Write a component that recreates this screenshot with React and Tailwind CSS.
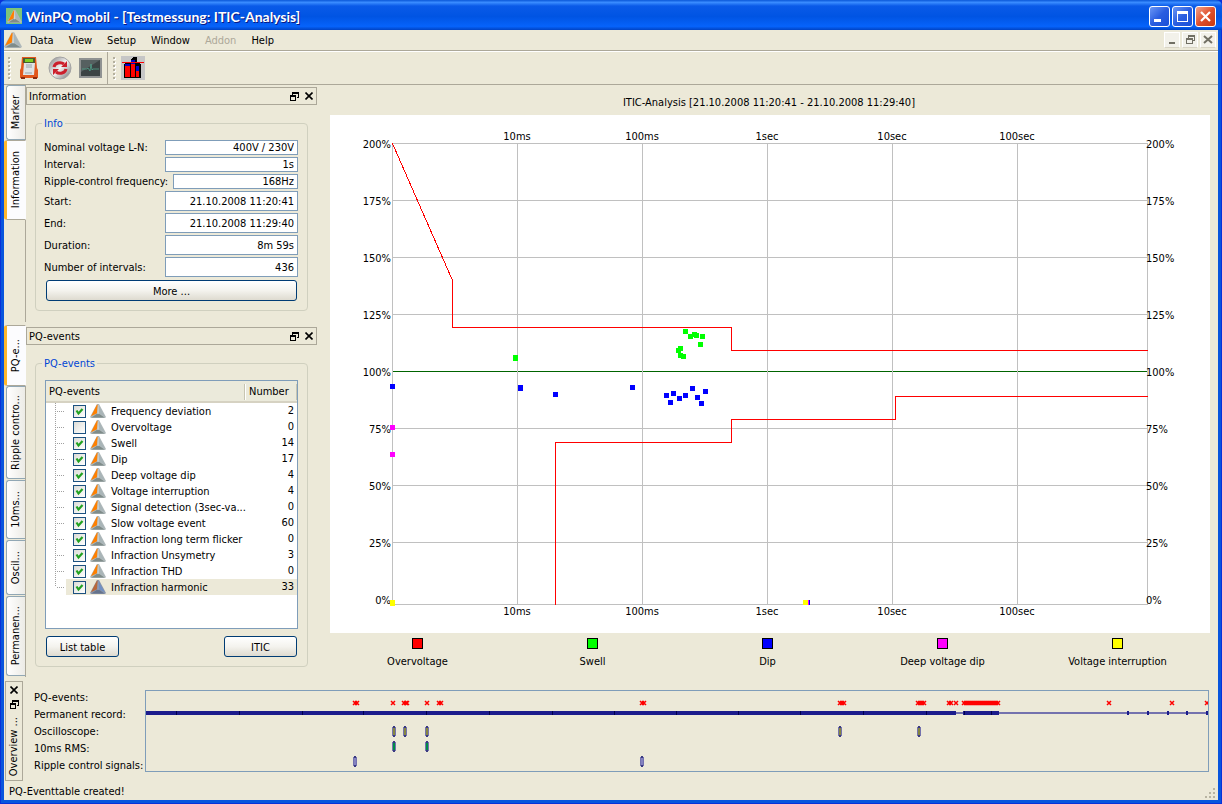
import { useState } from 'react';

const infoRows = [
  { id: 'nominal', label: 'Nominal voltage L-N:', value: '400V / 230V', size: 'h-[15px] w-[133px]' },
  { id: 'interval', label: 'Interval:', value: '1s', size: 'h-[15px] w-[133px]' },
  { id: 'ripple', label: 'Ripple-control frequency:', value: '168Hz', size: 'h-[15px] w-[125px]' },
  { id: 'start', label: 'Start:', value: '21.10.2008 11:20:41', size: 'h-5 w-[133px]' },
  { id: 'end', label: 'End:', value: '21.10.2008 11:29:40', size: 'h-5 w-[133px]' },
  { id: 'duration', label: 'Duration:', value: '8m 59s', size: 'h-5 w-[133px]' },
  { id: 'count', label: 'Number of intervals:', value: '436', size: 'h-5 w-[133px]' },
];

const initialEvents = [
  { name: 'Frequency deviation', count: 2, on: true },
  { name: 'Overvoltage', count: 0, on: false },
  { name: 'Swell', count: 14, on: true },
  { name: 'Dip', count: 17, on: true },
  { name: 'Deep voltage dip', count: 4, on: true },
  { name: 'Voltage interruption', count: 4, on: true },
  { name: 'Signal detection (3sec-va...', count: 0, on: true },
  { name: 'Slow voltage event', count: 60, on: true },
  { name: 'Infraction long term flicker', count: 0, on: true },
  { name: 'Infraction Unsymetry', count: 3, on: true },
  { name: 'Infraction THD', count: 0, on: true },
  { name: 'Infraction harmonic', count: 33, on: true },
];

const legend = [
  { name: 'Overvoltage', color: 'bg-[#ff0000]' },
  { name: 'Swell', color: 'bg-[#00ff00]' },
  { name: 'Dip', color: 'bg-[#0000ff]' },
  { name: 'Deep voltage dip', color: 'bg-[#ff00ff]' },
  { name: 'Voltage interruption', color: 'bg-[#ffff00]' },
];

// chart coordinates: 880 x 518
const timeTicks = [
  [187, '10ms'],
  [312, '100ms'],
  [437, '1sec'],
  [562, '10sec'],
  [687, '100sec'],
];
const levelTicks = [
  [28, '200%'],
  [85, '175%'],
  [142, '150%'],
  [199, '125%'],
  [256, '100%'],
  [313, '75%'],
  [370, '50%'],
  [427, '25%'],
  [484, '0%'],
];
const swells = [[183, 240], [183, 241], [353, 214], [358, 219], [362, 217], [364, 218], [370, 219], [368, 227], [348, 231], [346, 233], [348, 238], [351, 239]];
const dips = [[60, 269], [188, 270], [188, 271], [223, 277], [300, 270], [334, 278], [341, 276], [338, 285], [347, 281], [353, 278], [360, 271], [365, 280], [369, 286], [373, 274]];
const deepDips = [[60, 310], [60, 337]];
const interruptions = [[60, 485], [60, 486], [473, 485]];

// overview coordinates: 1062 x 80
const crosses = [209, 211, 247, 258, 260, 261, 281, 293, 295, 496, 498, 694, 696, 698, 772, 774, 776, 778, 803, 805, 810, 963, 1026, 1061];
for (let x = 818; x <= 852; x += 2) crosses.push(x);
const recordTicks = [30, 93, 156, 217, 280, 343, 406, 468, 530, 592, 654, 717, 780, 818, 845];
const shortRecords = [981, 1001, 1021, 1040, 1060];

const Logo = ({ className, selected }) => (
  <svg viewBox="0 0 16 14" className={className} aria-hidden="true">
    <path d="M7 0 H9 L16 13 L15 14 H1 L0 13 Z" fill={selected ? '#8a95a8' : '#b0b9bb'} />
    <path d="M7 .5 L1 12.2 L7 9.2 L7.8 1 Z" fill={selected ? '#b9683a' : '#ff8000'} />
    <path d="M8.8 1.4 L9.2 9 L14.8 12.4 Z" fill={selected ? '#6f8fc4' : '#a9b5b8'} />
    <path d="M7.9 1 H8.4 L8.8 9.2 L8 10 L7.4 9.2 Z" fill={selected ? '#8f9cb8' : '#d0d5d4'} />
    <path d="M1.5 13.4 L7 9.8 L8 10.2 L9 9.8 L14.5 13.4 Z" fill={selected ? '#65738c' : '#7f8c8a'} />
  </svg>
);

const FloatIcon = ({ className = '' }) => (
  <svg viewBox="0 0 9 9" className={`w-[9px] h-[9px] ${className}`} fill="#000" shapeRendering="crispEdges">
    <path d="M2 0h7v6h-2v-1h1v-3h-5v1h-1zM0 3h6v6h-6zM1 5v3h4v-3z" fillRule="evenodd" />
  </svg>
);

const CloseIcon = ({ className = '' }) => (
  <svg viewBox="0 0 8 8" className={`w-2 h-2 ${className}`} stroke="#000" strokeWidth="1.6">
    <path d="M.5 .5 L7.5 7.5 M7.5 .5 L.5 7.5" />
  </svg>
);

const Grip = () => (
  <div className="flex flex-col gap-[2px] w-[3px]">
    {[0, 1, 2, 3, 4, 5].map(i => <span key={i} className="w-[2px] h-[2px] bg-[#b4b09f] shadow-[1px_1px_0_#fff]" />)}
  </div>
);

const PushButton = ({ children, className = '' }) => (
  <button className={`h-[21px] rounded-[3px] border border-[#003c74] bg-gradient-to-b from-white via-[#f4f3ee] to-[#dedbd0] flex items-center justify-center pt-[2px] ${className}`}>
    {children}
  </button>
);

const SideTab = ({ children, active, className }) => (
  <button
    className={`flex items-center justify-center rounded-l-[3px] border text-[11px] ${
      active
        ? 'w-[22px] shrink-0 border-[#aca899] border-r-transparent border-l-[3px] border-l-[#ffb72b] bg-[#fcfcfe] -mr-px'
        : 'w-5 shrink-0 border-[#91a7b4] border-r-[#aca899] bg-gradient-to-r from-white to-[#ecebe6] -mr-px'
    } ${className}`}
  >
    <span className="[writing-mode:vertical-rl] rotate-180 leading-4 whitespace-nowrap">{children}</span>
  </button>
);

const Panel = ({ title, group, children }) => (
  <section className="flex-1 min-w-0 pt-[2px]">
    <header className="h-[18px] border border-[#aca899] flex items-center pl-[2px] pr-[3px]">
      <h2 className="flex-1 pt-px">{title}</h2>
      <button title="Float" className="mr-[6px]"><FloatIcon /></button>
      <button title="Close"><CloseIcon /></button>
    </header>
    <fieldset className="mt-[10px] mx-[9px] border border-[#d0d0bf] rounded-[4px] px-[9px] pt-[9px] pb-[9px] min-w-0">
      <legend className="h-4 leading-[18px] px-[2px] -ml-[3px] text-[#0046d5]">{group}</legend>
      {children}
    </fieldset>
  </section>
);

const Squares = ({ points, color }) => points.map(([x, y]) => (
  <rect key={`${x}-${y}`} x={x} y={y} width="5" height="5" fill={color} />
));

const Chart = () => (
  <svg viewBox="0 0 880 518" className="block w-full h-auto bg-white text-[11px]" shapeRendering="crispEdges" role="img" aria-label="ITIC-Analysis">
    <g transform="translate(.5 .5)" fill="none" stroke="#c0c0c0">
      {levelTicks.slice(0, 8).map(([y, t]) => <path key={t} d={`M62 ${y}H817`} stroke={t === '100%' ? '#006400' : '#c0c0c0'} />)}
      <path d="M62 489H817" />
      {[62, 187, 312, 437, 562, 687, 817].map(x => <path key={x} d={`M${x} 28V489`} />)}
      <g stroke="#ff0000">
        <path d="M62 28L122 165V212H401V235H817" />
        <path d="M225 489V327H401V304H565V281H817" />
      </g>
    </g>
    <g fill="#000">
      {timeTicks.map(([x, t]) => (
        <g key={t} textAnchor="middle">
          <text x={x} y="25">{t}</text>
          <text x={x} y="500">{t}</text>
        </g>
      ))}
      {levelTicks.map(([y, t]) => (
        <g key={t}>
          <text x="61" y={y + 5} textAnchor="end">{t}</text>
          <text x="816" y={y + 5}>{t}</text>
        </g>
      ))}
    </g>
    <Squares points={swells} color="#00ff00" />
    <Squares points={dips} color="#0000ff" />
    <Squares points={deepDips} color="#ff00ff" />
    <rect x="475" y="485" width="5" height="5" fill="#0000ff" />
    <rect x="474" y="485" width="5" height="5" fill="#ff00ff" />
    <Squares points={interruptions} color="#ffff00" />
  </svg>
);

const Capsule = ({ x, y, fill }) => (
  <g>
    <rect x={x - 2} y={y + 1} width="4" height="9" fill="#7472ae" />
    <rect x={x - 1} y={y} width="2" height="11" fill="#3a3a80" />
    <rect x={x - 1} y={y + 2} width="2" height="7" fill={fill} />
  </g>
);

const Timeline = () => (
  <svg viewBox="0 0 1062 80" preserveAspectRatio="none" className="block w-full h-20" role="img" aria-label="Overview">
    {crosses.map(x => (
      <path key={x} d={`M${x - 2} 10l4 4m0 -4l-4 4`} stroke="#ff0000" strokeWidth="1.5" />
    ))}
    <g shapeRendering="crispEdges">
      <rect x="810" y="21" width="252" height="2" fill="#7472ae" />
      <rect x="0" y="20" width="810" height="4" fill="#1c1c8c" />
      <rect x="817" y="20" width="36" height="4" fill="#1c1c8c" />
      {recordTicks.map(x => <rect key={x} x={x} y="20" width="1" height="4" fill="#00004c" />)}
      {shortRecords.map(x => <rect key={x} x={x} y="20" width="2" height="4" fill="#1c1c8c" />)}
      {[248, 259, 281, 694, 773].map(x => <Capsule key={x} x={x} y={35} fill="#85853f" />)}
      {[248, 281].map(x => <Capsule key={x} x={x} y={50} fill="#008c46" />)}
      {[209, 496].map(x => <Capsule key={x} x={x} y={65} fill="#8482c0" />)}
    </g>
  </svg>
);

const TitleBar = () => (
  <header className="h-[30px] shrink-0 rounded-t-[6px] bg-[linear-gradient(#0a57d8,#3a8cff_8%,#0a5ae8_20%,#0054e3_55%,#0663fb_88%,#0043c4)] flex items-center pl-[6px] pr-[6px] pt-[2px]">
    <span className="w-4 h-4 bg-[#7cc47a] flex items-center justify-center"><Logo className="w-[15px] h-[13px]" /></span>
    <h1 className="flex-1 ml-1 pt-px text-[14px] font-bold text-white [text-shadow:1px_1px_0_#0a1883] font-['Lato',sans-serif] whitespace-nowrap">WinPQ mobil - [Testmessung: ITIC-Analysis]</h1>
    <div className="flex gap-[2px]">
      <button title="Minimize" className="w-[21px] h-[21px] rounded-[3px] border border-white bg-gradient-to-br from-[#6b96f5] via-[#2a5de0] to-[#1a50d8]">
        <svg viewBox="0 0 19 19" className="w-full h-full"><path d="M4 12h7v3h-7z" fill="#fff" /></svg>
      </button>
      <button title="Restore" className="w-[21px] h-[21px] rounded-[3px] border border-white bg-gradient-to-br from-[#6b96f5] via-[#2a5de0] to-[#1a50d8]">
        <svg viewBox="0 0 19 19" className="w-full h-full"><path d="M4 4h11v11h-11zM5 7v7h9v-7z" fill="#fff" fillRule="evenodd" /></svg>
      </button>
      <button title="Close" className="w-[21px] h-[21px] rounded-[3px] border border-white bg-gradient-to-br from-[#f0a088] via-[#e0502c] to-[#c8380c]">
        <svg viewBox="0 0 19 19" className="w-full h-full"><path d="M5 5l9 9m0 -9l-9 9" stroke="#fff" strokeWidth="2.2" /></svg>
      </button>
    </div>
  </header>
);

const MenuBar = () => (
  <nav className="h-[21px] shrink-0 flex items-center border-b border-[#aca899] pr-[2px]">
    <Logo className="w-[18px] h-4" />
    <div className="flex-1 flex items-center gap-[15px] ml-2 pt-px">
      <button>Data</button>
      <button>View</button>
      <button>Setup</button>
      <button>Window</button>
      <button disabled className="text-[#aca899]">Addon</button>
      <button>Help</button>
    </div>
    <div className="flex gap-[2px]">
      <button title="Minimize" className="w-4 h-4 bg-[#f2f1ea] border border-white border-b-[#d8d4c4]">
        <svg viewBox="0 0 14 14" className="w-full h-full"><path d="M4 9h6v2h-6z" fill="#716f64" /></svg>
      </button>
      <button title="Restore" className="w-4 h-4 bg-[#f2f1ea] border border-white border-b-[#d8d4c4]">
        <svg viewBox="0 0 14 14" className="w-full h-full" fill="#716f64" shapeRendering="crispEdges"><path d="M5 2h7v6h-2v-1h1v-3h-5v1h-1zM3 5h7v6h-7zM4 7v3h5v-3z" fillRule="evenodd" /></svg>
      </button>
      <button title="Close" className="w-4 h-4 bg-[#f2f1ea] border border-white border-b-[#d8d4c4]">
        <svg viewBox="0 0 14 14" className="w-full h-full"><path d="M3 3l8 7m0 -7l-8 7" stroke="#716f64" strokeWidth="2" /></svg>
      </button>
    </div>
  </nav>
);

const ToolBar = () => (
  <div className="h-[34px] shrink-0 flex items-center border-t border-t-white border-b border-b-[#aca899] pl-1">
    <Grip />
    <button title="Device" className="ml-[9px]">
      <svg viewBox="0 0 18 24" className="w-[18px] h-6">
        <path d="M2 1h14l1 11 1 2v8h-18v-8l1-2z" fill="#e2571c" />
        <path d="M3 2h12v5h-12z" fill="#4a5a30" />
        <path d="M5 3h8v3h-8z" fill="#7ccf22" />
        <path d="M4 7h11l-1 12h-11z" fill="#dfe3e5" />
        <path d="M6 9h6M6 11h6M5 17h7" stroke="#9aa2a8" />
        <path d="M1 22h4M13 22h4" stroke="#8a2a10" strokeWidth="2" />
      </svg>
    </button>
    <button title="Reload" className="ml-[10px]">
      <svg viewBox="0 0 24 24" className="w-6 h-6">
        <defs>
          <linearGradient id="metal" x1="0" y1="0" x2="1" y2="1">
            <stop offset="0" stopColor="#7e7e7e" />
            <stop offset=".5" stopColor="#f4f4f4" />
            <stop offset="1" stopColor="#6e6e6e" />
          </linearGradient>
        </defs>
        <circle cx="12" cy="12" r="11" fill="url(#metal)" stroke="#a3a3a3" />
        <path d="M6 11a6 5 0 0 1 10-3M18 13a6 5 0 0 1-10 3" fill="none" stroke="#cc1f2c" strokeWidth="3" />
        <path d="M19 5v6h-6zM5 19v-6h6z" fill="#cc1f2c" />
      </svg>
    </button>
    <button title="Oscilloscope" className="ml-[7px]">
      <svg viewBox="0 0 23 20" className="w-[23px] h-5">
        <path d="M0 0h23v20h-23z" fill="#8f9292" />
        <path d="M2 2h19v16h-19z" fill="#3c4444" />
        <path d="M2 2h19l-19 12z" fill="#566060" />
        <path d="M3 11h5l1-1 2 3 1-7 1 6 1-1h6" fill="none" stroke="#52a28c" strokeWidth=".8" />
      </svg>
    </button>
    <div className="self-stretch w-px bg-[#aca899] ml-[5px] mr-[5px]" />
    <Grip />
    <button title="Harmonics" className="ml-[5px]">
      <svg viewBox="0 0 24 24" className="w-6 h-6" shapeRendering="crispEdges">
        <path d="M0 0h24v24h-24z" fill="#c6c6c6" />
        <path d="M3 8l2-2h5v-3l2-2h4v6h2l2 2v13h-17z" fill="#000" />
        <path d="M4 8h5v3h-5zM10 4h4v4h-4zM15 10h3v5h-3z" fill="#0000c8" />
        <path d="M4 10h5v11h-5zM10 8h4v13h-4zM15 15h3v6h-3z" fill="#ff0000" />
        <path d="M1 6h22v1h-22z" fill="#ff0000" />
      </svg>
    </button>
  </div>
);

const EventTree = () => {
  const [events, setEvents] = useState(initialEvents);

  const toggle = (name) => {
    setEvents(events.map(e => (e.name === name ? { ...e, on: !e.on } : e)));
  };

  return (
    <div className="h-[249px] border border-[#7f9db9] bg-white">
      <table className="w-full table-fixed border-collapse">
        <thead>
          <tr className="h-[21px] bg-[#ebeadb] border-b-2 border-[#d6d2c2]">
            <th className="font-normal text-left pl-[3px] p-0 pt-px">PQ-events</th>
            <th className="font-normal text-left p-0 pt-px w-[53px]">
              <div className="h-4 leading-4 border-x border-[#c7c5b2] pl-1 shadow-[inset_1px_0_0_#fff]">Number</div>
            </th>
          </tr>
        </thead>
        <tbody>
          {events.map((e, i) => {
            const last = i === events.length - 1;
            return (
              <tr key={e.name} className="h-4">
                <td className="p-0">
                  <div className="flex items-center h-4">
                    <svg viewBox="0 0 20 16" className="w-5 h-4 shrink-0" stroke="#a0a0a0" strokeDasharray="1 1" shapeRendering="crispEdges">
                      <path d={last ? 'M9.5 0V8' : 'M9.5 0V16'} />
                      <path d="M11 8.5H19" />
                    </svg>
                    <label className={`flex flex-1 min-w-0 items-center h-4 pl-[7px] whitespace-nowrap ${last ? 'bg-[#ece9d8]' : ''}`}>
                      <span className="relative w-[13px] h-[13px] shrink-0">
                        <input
                          type="checkbox"
                          checked={e.on}
                          onChange={() => toggle(e.name)}
                          className="block appearance-none w-[13px] h-[13px] border border-[#1c5180] bg-gradient-to-br from-[#dcdcd7] to-white"
                        />
                        {e.on && (
                          <svg viewBox="0 0 13 13" className="absolute inset-0 pointer-events-none">
                            <path d="M3.5 5.5L5.5 8.5L9.5 4" fill="none" stroke="#21a121" strokeWidth="2.2" />
                          </svg>
                        )}
                      </span>
                      <Logo className="w-4 h-[14px] ml-1 shrink-0" selected={last} />
                      <span className="ml-[5px] pt-px">{e.name}</span>
                    </label>
                  </div>
                </td>
                <td className={`p-0 text-right pr-[3px] leading-4 ${last ? 'bg-[#ece9d8]' : ''}`}>{e.count}</td>
              </tr>
            );
          })}
        </tbody>
      </table>
    </div>
  );
};

const App = () => (
  <div className="min-h-screen flex flex-col bg-[#0831d9] text-[11px] leading-4 text-black font-['DejaVu_Sans_Condensed','DejaVu_Sans',sans-serif]">
    <TitleBar />
    <div className="flex-1 flex flex-col mx-px mb-px border-x-[3px] border-b-[3px] border-[#0855dd] bg-[#ece9d8]">
      <MenuBar />
      <ToolBar />

      <main className="flex">
        <aside className="w-[313px] shrink-0 flex flex-col gap-[3px]">
          <div className="flex">
            <div className="w-[22px] h-[237px] shrink-0 flex flex-col items-end border-r border-[#aca899]">
              <SideTab className="h-[55px]">Marker</SideTab>
              <SideTab active className="h-20">Information</SideTab>
            </div>
            <Panel title="Information" group="Info">
              <div className="flex flex-col gap-[2px]">
                {infoRows.map(r => (
                  <div key={r.id} className="flex items-center justify-between">
                    <label htmlFor={r.id} className="-my-1 -ml-px pt-px whitespace-nowrap">{r.label}</label>
                    <input id={r.id} readOnly value={r.value} className={`${r.size} border border-[#7f9db9] bg-white text-right px-[3px] outline-none leading-3`} />
                  </div>
                ))}
              </div>
              <div className="mt-[3px] px-px">
                <PushButton className="w-full">More ...</PushButton>
              </div>
            </Panel>
          </div>

          <div className="flex">
            <div className="w-[22px] h-[352px] shrink-0 flex flex-col items-end border-r border-[#aca899]">
              <SideTab active className="h-[61px]">PQ-e...</SideTab>
              <SideTab className="h-[93px]">Ripple contro...</SideTab>
              <SideTab className="h-[59px] mt-px">10ms...</SideTab>
              <SideTab className="h-[55px] mt-px">Oscil...</SideTab>
              <SideTab className="h-20 mt-px">Permanen...</SideTab>
            </div>
            <Panel title="PQ-events" group="PQ-events">
              <EventTree />
              <div className="flex justify-between mt-[7px] px-px">
                <PushButton className="w-[73px]">List table</PushButton>
                <PushButton className="w-[73px]">ITIC</PushButton>
              </div>
            </Panel>
          </div>
        </aside>

        <section className="flex-1 min-w-0 pl-[13px] pr-2">
          <h2 className="h-[30px] pt-[10px] text-center pr-[2px]">ITIC-Analysis [21.10.2008 11:20:41 - 21.10.2008 11:29:40]</h2>
          <Chart />
          <ul className="flex pr-[5px] pt-[5px]">
            {legend.map(l => (
              <li key={l.name} className="flex-1 flex flex-col items-center gap-[5px]">
                <span className={`w-[11px] h-[11px] border border-black ${l.color}`} />
                <span className="whitespace-nowrap">{l.name}</span>
              </li>
            ))}
          </ul>
        </section>
      </main>

      <section className="flex mt-1 pl-px">
        <header className="w-[18px] h-[100px] shrink-0 border border-[#aca899] flex flex-col items-center pt-1">
          <button title="Close"><CloseIcon className="block" /></button>
          <button title="Float" className="mt-[6px]"><FloatIcon className="block" /></button>
          <h2 className="mt-2 [writing-mode:vertical-rl] rotate-180 leading-4 whitespace-nowrap">Overview ...</h2>
        </header>
        <div className="w-[111px] ml-[11px] mt-[9px] shrink-0 flex flex-col gap-[1px] whitespace-nowrap">
          <span>PQ-events:</span>
          <span>Permanent record:</span>
          <span>Oscilloscope:</span>
          <span>10ms RMS:</span>
          <span>Ripple control signals:</span>
        </div>
        <div className="flex-1 min-w-0 h-[82px] mt-[9px] mr-[9px] border border-[#7f9db9]">
          <Timeline />
        </div>
      </section>

      <footer className="flex-1 flex items-end justify-between pl-[5px] pr-[2px]">
        <span>PQ-Eventtable created!</span>
        <svg viewBox="0 0 12 12" className="w-3 h-3 mb-px" fill="#b8b4a2" shapeRendering="crispEdges">
          <path d="M9 1h2v2h-2zM5 5h2v2h-2zM9 5h2v2h-2zM1 9h2v2h-2zM5 9h2v2h-2zM9 9h2v2h-2z" />
        </svg>
      </footer>
    </div>
  </div>
);

export default App;
